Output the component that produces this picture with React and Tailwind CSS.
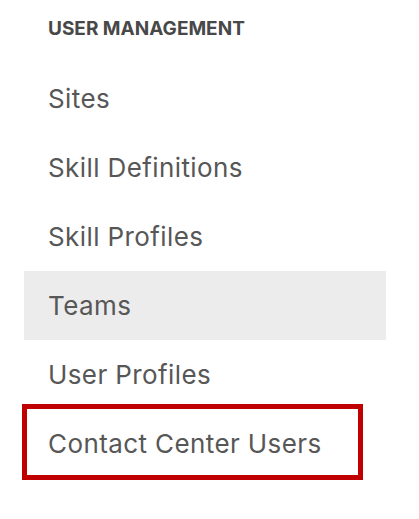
import React from 'react';

const items = ['Sites', 'Skill Definitions', 'Skill Profiles', 'Teams', 'User Profiles', 'Contact Center Users'];

export default function App() {
  return (
    <div className="w-[419px] h-[519px] bg-white font-['Inter',sans-serif]">
      <div className="pl-[24px] w-[386px]">
        <div className="pl-[24px] pt-[17px] h-[64px] text-[19px] font-bold text-[#484848] leading-[24px]">
          USER MANAGEMENT
        </div>
        <ul>
          {items.map((it) => (
            <li
              key={it}
              className={
                'relative h-[69px] flex items-center pl-[24px] text-[26px] text-[#575757] tracking-[0.4px] ' +
                (it === 'Teams' ? 'bg-[#ececec]' : '')
              }
            >
              {it}
              {it === 'Contact Center Users' && (
                <span className="absolute left-[-2px] top-[-5px] w-[341px] h-[76px] border-[5px] border-[#c00000]" />
              )}
            </li>
          ))}
        </ul>
      </div>
    </div>
  );
}
